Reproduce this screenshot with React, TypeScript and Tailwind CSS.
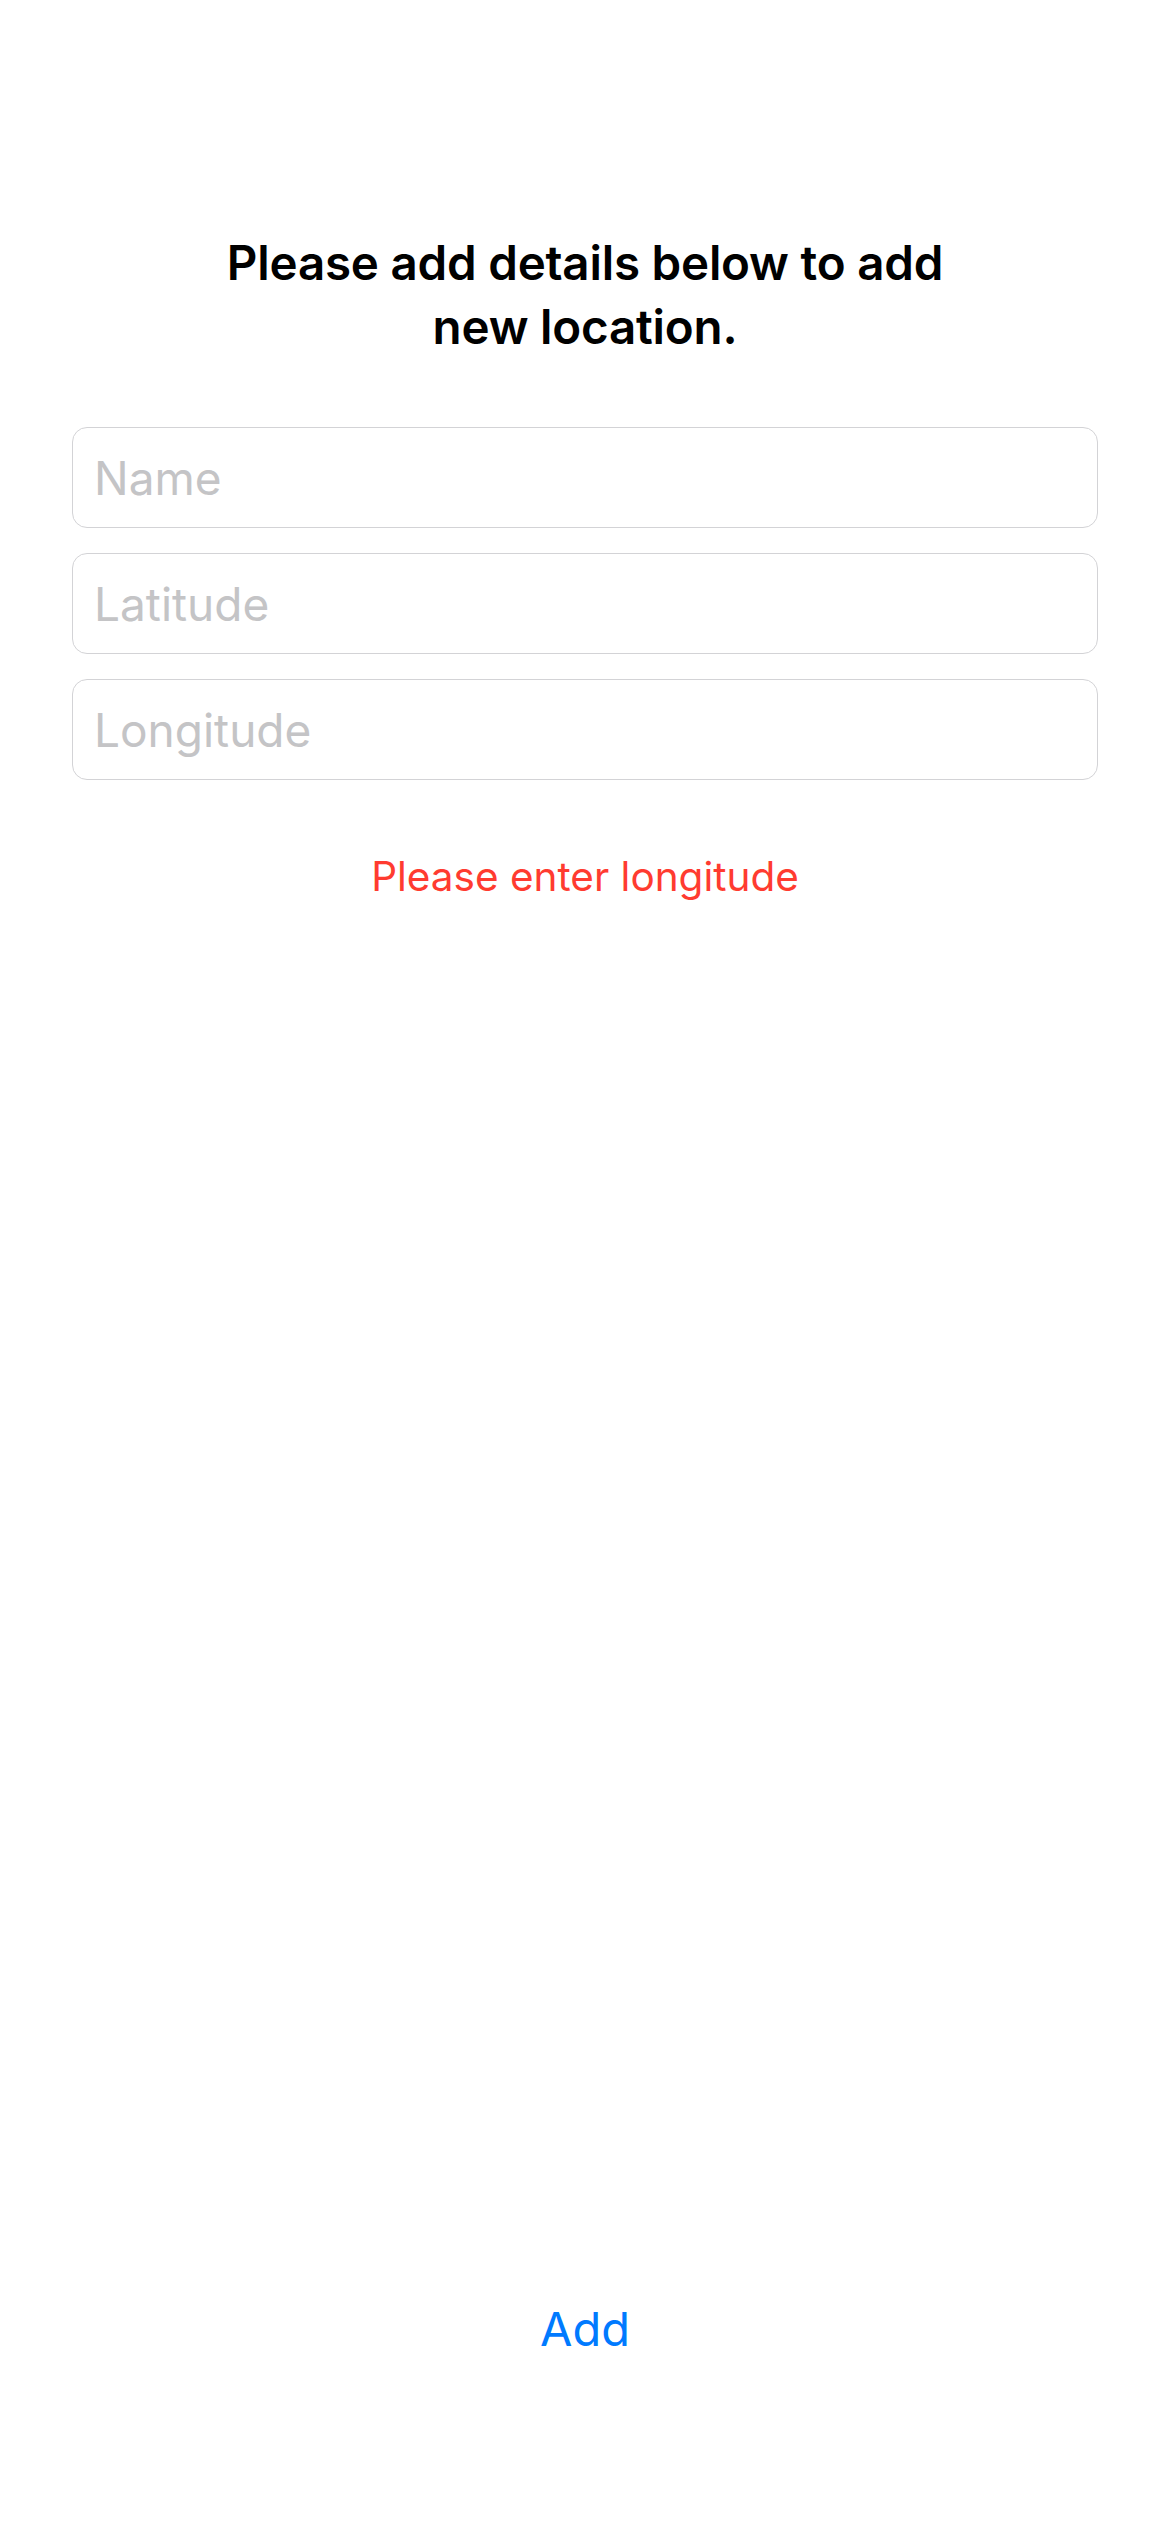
import React from "react";

export default function App() {
  const font = { fontFamily: "Inter, 'Noto Sans', sans-serif" };
  return (
    <div
      className="flex min-h-[2532px] w-[1170px] flex-col bg-white px-[72px] pt-[231px] pb-[173px]"
      style={font}
    >
      <h1 className="text-center text-[47.5px] font-semibold leading-[64px] tracking-[-0.2px] text-black">
        Please add details below to add
        <br />
        new location.
      </h1>
      <div className="mt-[68px] flex flex-col gap-[25px]">
        {["Name", "Latitude", "Longitude"].map((p) => (
          <input
            key={p}
            placeholder={p}
            className="h-[101px] w-full rounded-[15px] border-[1.5px] border-[#d3d3d6] bg-white px-[21px] text-[46px] text-black outline-none placeholder:text-[#c4c4c6]"
            style={font}
          />
        ))}
      </div>
      <p className="mt-[72px] text-center text-[40.5px] leading-[50px] text-[#ff3b30]">
        Please enter longitude
      </p>
      <div className="flex-1" />
      <button className="mx-auto text-[47px] leading-[60px] text-[#007aff]" style={font}>
        Add
      </button>
    </div>
  );
}
